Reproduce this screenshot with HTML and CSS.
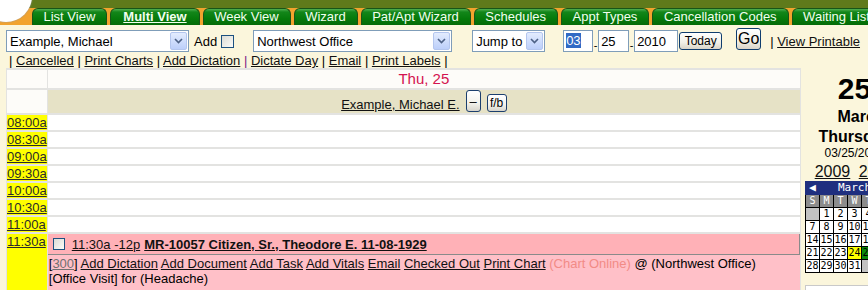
FILE: index.html
```html
<!DOCTYPE html>
<html lang="en">
<head>
    <meta charset="UTF-8">
    <meta name="viewport" content="width=device-width, initial-scale=1.0">
    <title>Scheduler || Multi View</title>
    <link rel="stylesheet" href="styles.css">
</head>
<body>
    <div class="tabs">
        <a class="tab" href="#">List View</a>
        <a class="tab active" href="#">Multi View</a>
        <a class="tab" href="#">Week View</a>
        <a class="tab" href="#">Wizard</a>
        <a class="tab" href="#">Pat/Apt Wizard</a>
        <a class="tab" href="#">Schedules</a>
        <a class="tab" href="#">Appt Types</a>
        <a class="tab" href="#">Cancellation Codes</a>
        <a class="tab" href="#">Waiting List</a>
    </div>

    <form class="toolbar" action="#" method="get">
        <span class="combo combo-provider">
            <select name="provider"><option>Example, Michael</option></select>
            <span class="combo-arrow"><svg width="9" height="6" viewBox="0 0 9 6"><path d="M1 1l3.5 3.5L8 1" fill="none" stroke="#4d6185" stroke-width="1.6"/></svg></span>
        </span>
        <label class="add">Add <input class="check" type="checkbox" name="add"></label>
        <span class="combo combo-office">
            <select name="office"><option>Northwest Office</option></select>
            <span class="combo-arrow"><svg width="9" height="6" viewBox="0 0 9 6"><path d="M1 1l3.5 3.5L8 1" fill="none" stroke="#4d6185" stroke-width="1.6"/></svg></span>
        </span>
        <span class="combo combo-jump">
            <select name="jump"><option>Jump to</option></select>
            <span class="combo-arrow"><svg width="9" height="6" viewBox="0 0 9 6"><path d="M1 1l3.5 3.5L8 1" fill="none" stroke="#4d6185" stroke-width="1.6"/></svg></span>
        </span>
        <span class="date date-month"><span class="picked">03</span></span>
        <span class="dash">-</span>
        <input class="date date-day" type="text" name="day" value="25">
        <span class="dash">-</span>
        <input class="date date-year" type="text" name="year" value="2010">
        <button class="btn btn-today" type="button">Today</button>
        <button class="btn btn-go" type="submit">Go</button>
        <span class="printable">| <a href="#">View Printable</a></span>
    </form>

    <div class="links">
        | <a href="#">Cancelled</a> | <a href="#">Print Charts</a> | <a href="#">Add Dictation</a> <span class="sep-visited">|</span> <a href="#">Dictate Day</a> | <a href="#">Email</a> | <a href="#">Print Labels</a> |
    </div>

    <div class="main">
        <table class="sched">
            <tr class="day-row">
                <td class="blank"></td>
                <td class="day-title">Thu, 25</td>
            </tr>
            <tr class="who-row">
                <td class="blank"></td>
                <td class="who">
                    <div class="who-inner">
                        <a href="#">Example, Michael E.</a>
                        <button class="mini-btn btn-collapse" type="button">&ndash;</button>
                        <button class="mini-btn btn-fb" type="button">f/b</button>
                    </div>
                </td>
            </tr>
            <tr><td class="time"><a href="#">08:00a</a></td><td class="slot"></td></tr>
            <tr><td class="time"><a href="#">08:30a</a></td><td class="slot"></td></tr>
            <tr><td class="time"><a href="#">09:00a</a></td><td class="slot"></td></tr>
            <tr><td class="time"><a href="#">09:30a</a></td><td class="slot"></td></tr>
            <tr><td class="time"><a href="#">10:00a</a></td><td class="slot"></td></tr>
            <tr><td class="time"><a href="#">10:30a</a></td><td class="slot"></td></tr>
            <tr><td class="time"><a href="#">11:00a</a></td><td class="slot"></td></tr>
            <tr>
                <td class="time time-top"><a href="#">11:30a</a></td>
                <td class="appt">
                    <div class="appt-head">
                        <input class="check" type="checkbox" name="appt">
                        <a class="appt-time" href="#">11:30a -12p</a>
                        <a class="appt-patient" href="#">MR-10057 Citizen, Sr., Theodore E. 11-08-1929</a>
                    </div>
                    <div class="appt-body">
                        [<a class="code" href="#">300</a>] <a href="#">Add Dictation</a> <a href="#">Add Document</a> <a href="#">Add Task</a> <a href="#">Add Vitals</a> <a href="#">Email</a> <a href="#">Checked Out</a> <a href="#">Print Chart</a> <span class="online">(Chart Online)</span> @ (Northwest Office)<br>
                        [Office Visit] for (Headache)
                    </div>
                </td>
            </tr>
        </table>

        <div class="side">
            <div class="side-day">25</div>
            <div class="side-month">March</div>
            <div class="side-weekday">Thursday</div>
            <div class="side-date">03/25/2010</div>
            <div class="side-years"><a href="#">2009</a> <a href="#">2010</a></div>
            <table class="cal">
                <tr class="nav"><td>&#9664;</td><td colspan="5">March</td><td>&#9654;</td></tr>
                <tr class="dow"><td>S</td><td>M</td><td>T</td><td>W</td><td>T</td><td>F</td><td>S</td></tr>
                <tr><td class="off"></td><td>1</td><td>2</td><td>3</td><td>4</td><td>5</td><td>6</td></tr>
                <tr><td>7</td><td>8</td><td>9</td><td>10</td><td>11</td><td>12</td><td>13</td></tr>
                <tr><td>14</td><td>15</td><td>16</td><td>17</td><td>18</td><td>19</td><td>20</td></tr>
                <tr><td>21</td><td>22</td><td>23</td><td class="marked">24</td><td class="today">25</td><td>26</td><td>27</td></tr>
                <tr><td>28</td><td>29</td><td>30</td><td>31</td><td class="off"></td><td class="off"></td><td class="off"></td></tr>
            </table>
            <div class="side-box"></div>
        </div>
    </div>
</body>
</html>
```

FILE: styles.css
```css
html, body {
    overflow: hidden;
}
body {
    margin: 0;
    padding: 0;
    background-color: #fbf6dc;
    font-family: "Liberation Sans", Arial, sans-serif;
    font-size: 13px;
    color: #000;
}
a {
    color: #111;
}

/* tab strip */
.tabs {
    position: relative;
    display: flex;
    gap: 3px;
    height: 25px;
    box-sizing: border-box;
    padding: 8px 0 0 32px;
    background: linear-gradient(#5f7a1b 0, #5f7a1b 8px, #f2a32e 8px);
    white-space: nowrap;
}
.tabs::before {
    content: "";
    position: absolute;
    left: -20px;
    top: -30px;
    width: 52px;
    height: 52px;
    border-radius: 50%;
    background-color: #fff;
    box-shadow: 0 0 2px #9a9a9a;
}
.tab {
    display: block;
    height: 17px;
    box-sizing: border-box;
    padding: 0 11px 0 10.5px;
    line-height: 16px;
    border: 1px solid #175517;
    border-bottom: none;
    border-radius: 6px 6px 0 0;
    background: linear-gradient(#52b052 0, #13861a 3px, #067a0b 60%, #046b08);
    color: #f2fff0;
    font-size: 13px;
    text-decoration: none;
}
.tab.active {
    font-weight: bold;
    text-decoration: underline;
    padding: 0 12px;
}

/* toolbar */
.toolbar {
    display: flex;
    align-items: center;
    height: 22px;
    margin: 5px 0 0 6px;
    white-space: nowrap;
}
.combo {
    display: flex;
    align-items: center;
    height: 22px;
    box-sizing: border-box;
    border: 1px solid #7f9db9;
    background-color: #fff;
}
.combo select {
    flex: 1;
    min-width: 0;
    height: 100%;
    border: none;
    padding: 0 0 0 3px;
    background: transparent;
    font-family: "Liberation Sans", Arial, sans-serif;
    font-size: 13px;
    color: #000;
    appearance: none;
    -webkit-appearance: none;
}
.combo-arrow {
    display: flex;
    align-items: center;
    justify-content: center;
    width: 15px;
    height: 16px;
    margin-right: 1px;
    border: 1px solid #b4c6ee;
    border-radius: 2px;
    background: linear-gradient(#e3ecfe, #bccffa);
}
.combo-provider {
    width: 183px;
}
.combo-office {
    width: 199px;
    margin-left: 19px;
}
.combo-jump {
    width: 73px;
    margin-left: 20px;
}
.add {
    display: flex;
    align-items: center;
    margin-left: 5px;
}
.check {
    appearance: none;
    -webkit-appearance: none;
    width: 13px;
    height: 13px;
    margin: 0 0 0 4px;
    box-sizing: border-box;
    border: 1px solid #1c5180;
    background: linear-gradient(135deg, #dcdcd5, #fbfbf8);
}
.date {
    display: block;
    height: 22px;
    box-sizing: border-box;
    border: 1px solid #7f9db9;
    padding: 0 2px;
    background-color: #fff;
    font-family: "Liberation Sans", Arial, sans-serif;
    font-size: 13px;
    line-height: 20px;
}
.date-month {
    width: 30px;
    margin-left: 18px;
}
.date-month .picked {
    background-color: #316ac5;
    color: #fff;
}
.date-day {
    width: 31px;
}
.date-year {
    width: 44px;
}
.dash {
    width: 5px;
    text-align: center;
    font-size: 11px;
    padding-top: 8px;
}
.btn {
    box-sizing: border-box;
    padding: 0;
    border: 1px solid #0f3d6e;
    border-radius: 3px;
    background: linear-gradient(#ffffff, #f1efe6 60%, #d9d4c8);
    font-family: "Liberation Sans", Arial, sans-serif;
    color: #000;
}
.btn-today {
    width: 43px;
    height: 18px;
    margin-left: 1px;
    font-size: 12px;
}
.btn-go {
    width: 25px;
    height: 22px;
    margin: 0 0 4px 14px;
    font-size: 16px;
}
.printable {
    margin-left: 9px;
}

/* link row */
.links {
    height: 15px;
    margin-top: 1px;
    padding-left: 9px;
    line-height: 15px;
    white-space: nowrap;
}
.sep-visited {
    color: #7a1a86;
}

/* main schedule */
.main {
    display: flex;
    align-items: flex-start;
    margin-left: 6px;
}
.sched {
    flex-shrink: 0;
    width: 795px;
    border-collapse: separate;
    border-spacing: 1px 2px;
    background-color: #e3e3e1;
    line-height: 15px;
}
.sched td {
    padding: 0;
}
.blank {
    width: 39px;
    background-color: #fdfcf9;
}
.day-row td {
    height: 18px;
}
.day-title {
    background-color: #fdfcf9;
    text-align: center;
    color: #d4134f;
    font-size: 15px;
    line-height: 18px;
}
.who-row td {
    height: 23px;
}
.who {
    background-color: #e6e2c6;
    vertical-align: bottom;
}
.who-inner {
    display: flex;
    justify-content: center;
    align-items: flex-end;
    gap: 6px;
    padding-bottom: 1px;
}
.mini-btn {
    box-sizing: border-box;
    padding: 0;
    border: 1px solid #1c3f6e;
    border-radius: 3px;
    background: linear-gradient(#ffffff, #f3f2ec 60%, #d7d4cb);
    font-family: "Liberation Sans", Arial, sans-serif;
    color: #000;
}
.btn-collapse {
    width: 15px;
    height: 22px;
    font-size: 13px;
}
.btn-fb {
    width: 20px;
    height: 18px;
    font-size: 12px;
}
.time {
    width: 39px;
    height: 15px;
    background-color: #ffff00;
    vertical-align: top;
}
.time a {
    color: #2b2b2b;
}
.slot {
    background-color: #fff;
}

/* appointment */
.appt {
    vertical-align: top;
    background-color: #ffc0c8;
}
.appt-head {
    display: flex;
    align-items: center;
    height: 21px;
    box-sizing: border-box;
    padding-left: 1px;
    border-right: 1px solid #8a8a8a;
    border-bottom: 1px solid #8a8a8a;
    background-color: #ffb1b7;
    white-space: nowrap;
}
.appt-head .check {
    width: 12px;
    height: 12px;
    margin-left: 4px;
}
.appt-time {
    margin-left: 7px;
}
.appt-patient {
    margin-left: 4px;
    font-weight: bold;
}
.appt-body {
    padding: 1px 0 6px 1px;
    line-height: 15px;
}
.appt-body .code {
    color: #707070;
}
.online {
    color: #f28b86;
}

/* side calendar */
.side {
    flex-shrink: 0;
    width: 99px;
    margin-left: 4px;
    padding-top: 4px;
    text-align: center;
    white-space: nowrap;
}
.side-day {
    font-size: 30px;
    font-weight: bold;
    line-height: 34px;
}
.side-month {
    margin-top: 2px;
    padding-left: 13px;
    font-size: 16px;
    font-weight: bold;
    line-height: 18px;
}
.side-weekday {
    margin-top: 2px;
    font-size: 16px;
    font-weight: bold;
    line-height: 18px;
}
.side-date {
    font-size: 12px;
    line-height: 14px;
}
.side-years {
    margin-top: 3px;
    font-size: 16px;
    line-height: 18px;
}
.side-years a {
    margin: 0 2px;
}
.cal {
    border-collapse: collapse;
    font-family: "DejaVu Sans Mono", monospace;
    font-size: 10px;
}
.cal td {
    width: 13px;
    height: 12px;
    padding: 0;
    border: 1px solid #000;
    background-color: #fff;
    text-align: center;
    line-height: 12px;
}
.cal .nav td {
    border-color: #1f2f7f;
    background-color: #1f2f7f;
    color: #fff;
    font-size: 11px;
}
.cal .dow td {
    background-color: #8c8c8c;
    color: #fff;
}
.cal .off {
    background-color: #c2c2c2;
}
.cal .marked {
    background-color: #ffff00;
}
.cal .today {
    background-color: #0a8a0a;
}
.side-box {
    height: 20px;
    margin-top: 12px;
    border: 1px solid #c9c9c9;
    background-color: #fff;
}
```
